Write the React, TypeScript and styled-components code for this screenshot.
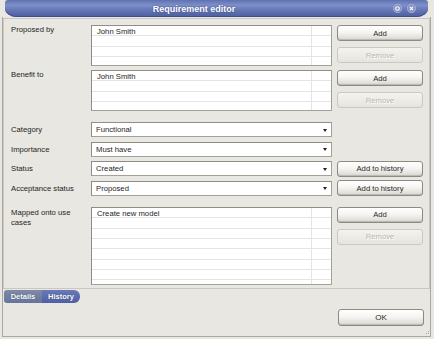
import React from "react";
import styled, { createGlobalStyle } from "styled-components";

const GlobalStyle = createGlobalStyle`
  html, body { margin: 0; padding: 0; background: #e9e7e1; }
  * { box-sizing: border-box; }
`;

const Root = styled.div`
  width: 434px;
  height: 339px;
  background: #e9e7e1;
  font-family: "Liberation Sans", Arial, sans-serif;
  font-size: 7.7px;
  color: #1e1e1e;
  overflow: hidden;
`;

const TitleBar = styled.div`
  display: flex;
  align-items: center;
  height: 17px;
  margin: 0 6px 0 5px;
  border-radius: 3px 3px 11px 11px / 3px 3px 9px 9px;
  background: linear-gradient(#5f71b1 0%, #7e8fc8 30%, #6576b6 60%, #4d5e9f 100%);
  box-shadow: inset 0 -1px 0 #3f4f8e;
`;

const Title = styled.div`
  flex: 1;
  text-align: center;
  color: #ffffff;
  font-weight: bold;
  font-size: 9px;
  text-shadow: 0 0 2px #3a4a85;
`;

const TitleButtons = styled.div`
  display: flex;
  gap: 5px;
  width: 45px;
  padding-left: 10px;
`;

const Frame = styled.div`
  margin: 0 3px 0 2px;
  height: 320px;
  border: 1px solid #a9a79f;
  border-top: none;
  display: flex;
  flex-direction: column;
`;

const Panel = styled.div`
  margin-top: 1px;
  border: 1px solid #c9c7bf;
  padding: 6px 0 3px 7px;
  display: flex;
  flex-direction: column;
`;

const Row = styled.div<{ $gap?: number }>`
  display: flex;
  align-items: flex-start;
  margin-top: ${(p) => p.$gap ?? 0}px;
`;

const Label = styled.div<{ $pad?: number }>`
  width: 80px;
  padding-right: 6px;
  padding-top: ${(p) => p.$pad ?? 0}px;
  line-height: 10px;
`;

const ListBox = styled.div<{ $height: number }>`
  width: 241px;
  height: ${(p) => p.$height}px;
  background: #ffffff;
  border: 1px solid #a3a19a;
  border-top-color: #8f8d86;
  border-left-color: #8f8d86;
  overflow: hidden;
`;

const ListRowLine = styled.div`
  display: flex;
  height: 10.33px;
  border-bottom: 1px solid #e4e4e4;
`;

const ListCell = styled.div`
  width: 220px;
  border-right: 1px solid #e4e4e4;
  padding: 1px 0 0 5px;
  line-height: 9px;
  white-space: nowrap;
`;

const ButtonColumn = styled.div`
  display: flex;
  flex-direction: column;
  gap: 6px;
  margin-left: 5px;
`;

const Button = styled.button`
  width: 86px;
  height: 16px;
  padding: 0;
  font-family: inherit;
  font-size: 7.7px;
  color: #2a2a2a;
  border: 1px solid #8c8a83;
  border-radius: 3px;
  background: linear-gradient(#ffffff 0%, #f6f5f2 45%, #e2e0da 85%, #cfcdc6 100%);
  box-shadow: inset 0 -1px 0 #bcbab3;
  &:disabled {
    color: #b9b7b0;
    text-shadow: 1px 1px 0 #ffffff;
    border-color: #cac8c1;
    background: linear-gradient(#f4f3ef, #e6e4de);
    box-shadow: none;
  }
`;

const OkButton = styled(Button)`
  height: 17px;
  font-size: 8px;
`;

const ComboGroup = styled.div`
  display: flex;
  flex-direction: column;
  gap: 4.67px;
  margin-top: 11px;
`;

const ComboRow = styled.div`
  display: flex;
  align-items: center;
  height: 15px;
`;

const ComboLabel = styled.div`
  width: 80px;
  padding-right: 6px;
  line-height: 11px;
  white-space: nowrap;
`;

const Combo = styled.div`
  width: 241px;
  height: 15px;
  display: flex;
  align-items: center;
  background: #ffffff;
  border: 1px solid #a3a19a;
  border-top-color: #8f8d86;
  border-left-color: #8f8d86;
  padding: 0 4px 0 4px;
  line-height: 11px;
`;

const ComboText = styled.span`
  flex: 1;
`;

const Arrow = styled.span`
  width: 0;
  height: 0;
  border-left: 2.5px solid transparent;
  border-right: 2.5px solid transparent;
  border-top: 3px solid #222;
  margin-top: 1px;
`;

const Tabs = styled.div`
  display: flex;
  margin: 1px 0 0 1px;
  height: 13px;
`;

const Tab = styled.div<{ $active?: boolean }>`
  display: flex;
  align-items: center;
  justify-content: center;
  width: 38px;
  color: #ffffff;
  font-weight: bold;
  font-size: 7.5px;
  background: ${(p) =>
    p.$active
      ? "linear-gradient(#6a79b8, #4f5fa2)"
      : "linear-gradient(#7e8ba8, #66749a)"};
  border-radius: ${(p) => (p.$active ? "0 6px 6px 0" : "3px 0 0 3px")};
  text-shadow: 0 0 1px #2f3a60;
`;

const Footer = styled.div`
  display: flex;
  justify-content: flex-end;
  margin-top: 6px;
  padding-right: 6px;
`;

const Grip = styled.div`
  align-self: flex-end;
  margin: auto 1px 2px 0;
  width: 3px;
  height: 3px;
  border-right: 1px dotted #a9a79f;
  border-bottom: 1px dotted #a9a79f;
`;

function TitleButton({ kind }: { kind: "min" | "close" }) {
  return (
    <svg width="9" height="9" viewBox="0 0 9 9">
      <circle cx="4.5" cy="4.5" r="4.2" fill="#8593c6" stroke="#b7c1e3" strokeWidth="0.6" />
      {kind === "min" ? (
        <circle cx="4.5" cy="4.5" r="1.8" fill="none" stroke="#ffffff" strokeWidth="1.1" />
      ) : (
        <path d="M2.9 2.9 L6.1 6.1 M6.1 2.9 L2.9 6.1" stroke="#ffffff" strokeWidth="1.1" />
      )}
    </svg>
  );
}

function List({ items, rows, height }: { items: string[]; rows: number; height: number }) {
  const lines = Array.from({ length: rows }, (_, i) => items[i] ?? "");
  return (
    <ListBox $height={height}>
      {lines.map((t, i) => (
        <ListRowLine key={i}>
          <ListCell>{t}</ListCell>
        </ListRowLine>
      ))}
    </ListBox>
  );
}

const combos = [
  { label: "Category", value: "Functional", history: false },
  { label: "Importance", value: "Must have", history: false },
  { label: "Status", value: "Created", history: true },
  { label: "Acceptance status", value: "Proposed", history: true },
];

export default function App() {
  return (
    <Root>
      <GlobalStyle />
      <TitleBar>
        <Title>Requirement editor</Title>
        <TitleButtons>
          <TitleButton kind="min" />
          <TitleButton kind="close" />
        </TitleButtons>
      </TitleBar>
      <Frame>
        <Panel>
          <Row>
            <Label>Proposed by</Label>
            <List items={["John Smith"]} rows={4} height={41} />
            <ButtonColumn>
              <Button>Add</Button>
              <Button disabled>Remove</Button>
            </ButtonColumn>
          </Row>
          <Row $gap={4}>
            <Label>Benefit to</Label>
            <List items={["John Smith"]} rows={4} height={41} />
            <ButtonColumn>
              <Button>Add</Button>
              <Button disabled>Remove</Button>
            </ButtonColumn>
          </Row>
          <ComboGroup>
            {combos.map((c) => (
              <ComboRow key={c.label}>
                <ComboLabel>{c.label}</ComboLabel>
                <Combo>
                  <ComboText>{c.value}</ComboText>
                  <Arrow />
                </Combo>
                {c.history && (
                  <ButtonColumn>
                    <Button>Add to history</Button>
                  </ButtonColumn>
                )}
              </ComboRow>
            ))}
          </ComboGroup>
          <Row $gap={11}>
            <Label $pad={1}>Mapped onto use cases</Label>
            <List items={["Create new model"]} rows={8} height={78} />
            <ButtonColumn>
              <Button>Add</Button>
              <Button disabled>Remove</Button>
            </ButtonColumn>
          </Row>
        </Panel>
        <Tabs>
          <Tab>Details</Tab>
          <Tab $active>History</Tab>
        </Tabs>
        <Footer>
          <OkButton>OK</OkButton>
        </Footer>
        <Grip />
      </Frame>
    </Root>
  );
}
